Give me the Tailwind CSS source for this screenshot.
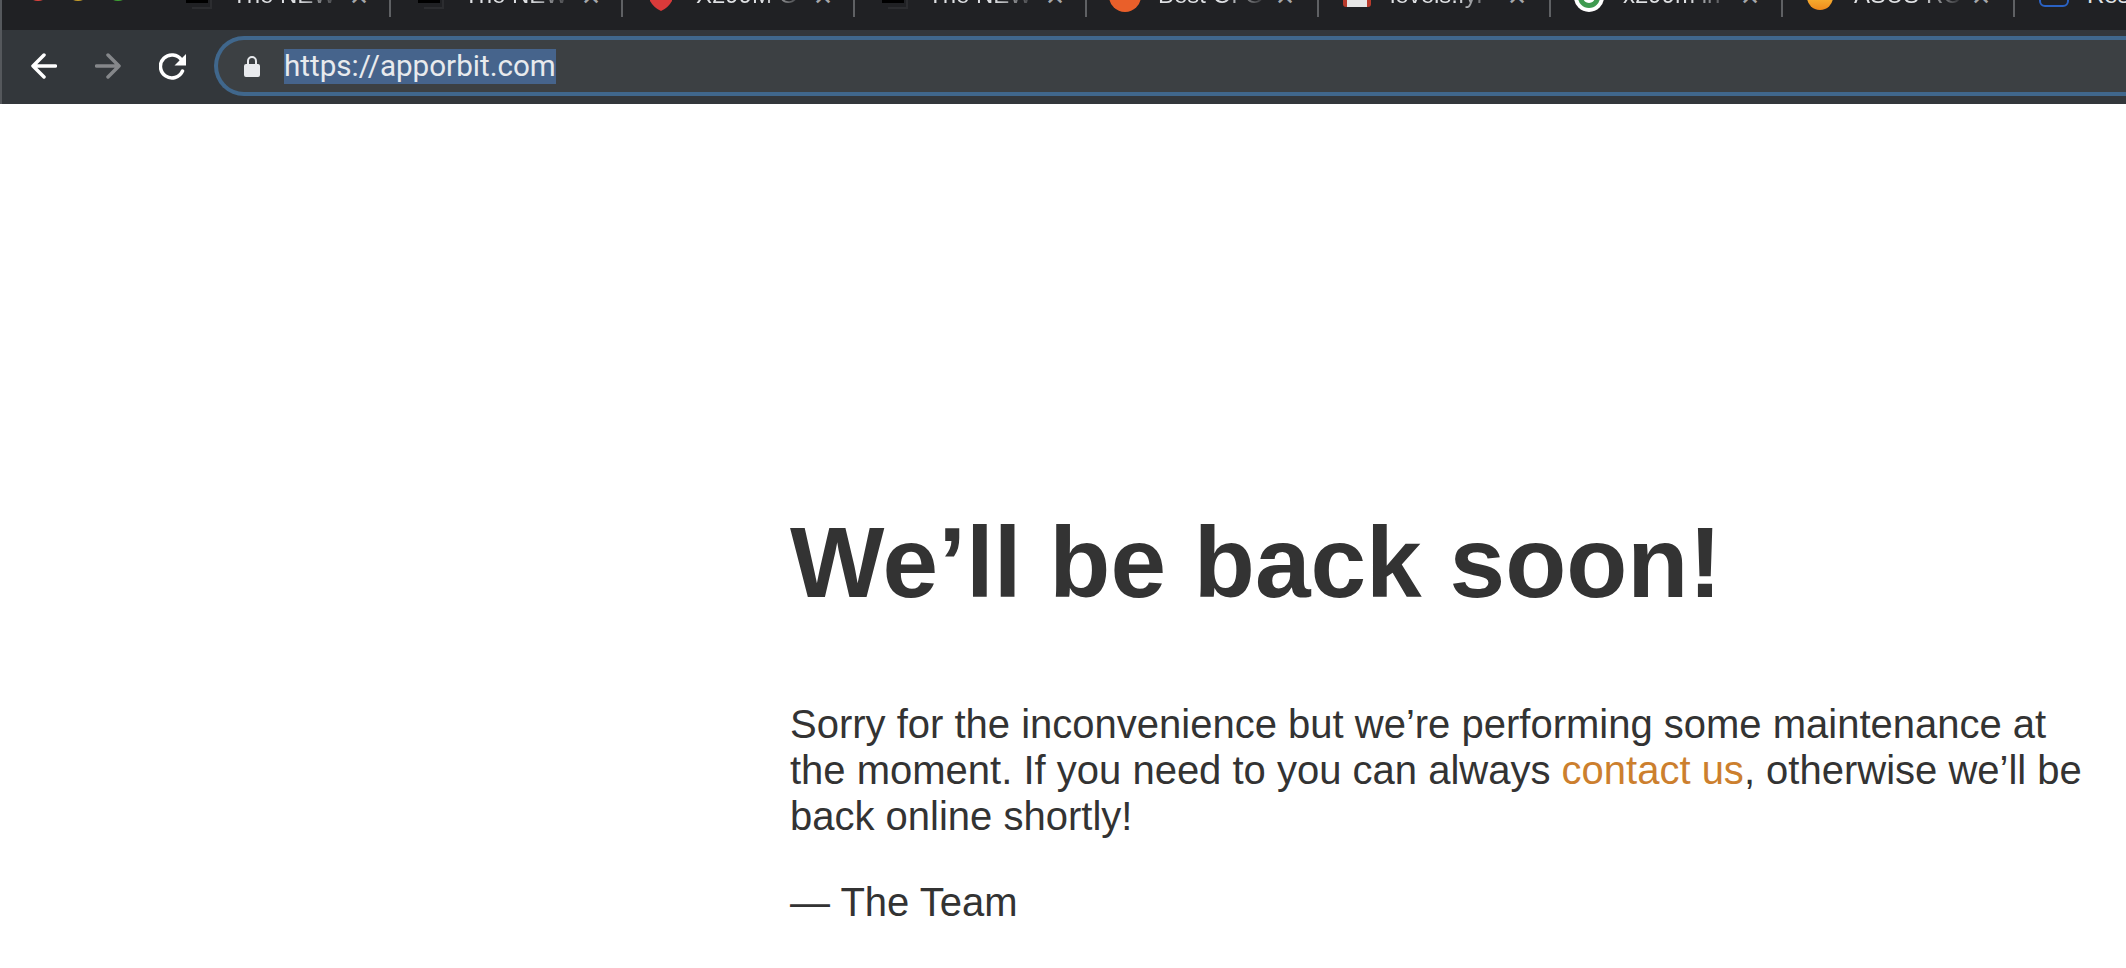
<!DOCTYPE html>
<html><head><meta charset="utf-8"><script src="https://cdn.jsdelivr.net/npm/@tailwindcss/browser@4"></script></head>
<body class="m-0 h-[968px] w-[2126px] overflow-hidden bg-white font-['Liberation_Sans',sans-serif]">
<div class="h-[30px] bg-[#202124] border-l-2 border-[#55585c] overflow-hidden flex items-start">
  <div class="flex gap-4 ml-6 mr-[29px] shrink-0">
    <div class="w-6 h-6 -mt-[23px] rounded-full bg-[#e0443e]"></div>
    <div class="w-6 h-6 -mt-[23px] rounded-full bg-[#c9a02c]"></div>
    <div class="w-6 h-6 -mt-[23px] rounded-full bg-[#3fa534]"></div>
  </div>
  <div class="flex">
    <div class="flex w-[232px] shrink-0 h-[17px] border-r-2 border-[#5f6164] items-start pl-[27px]">
      <svg class="w-7 h-7 -mt-[19px] shrink-0" viewBox="0 0 28 28"><path d="M0 0h22v22H0z" fill="#000"/><path d="M24 6h2v22H6v-2h18z" fill="#2c2d30"/></svg>
      <span class="ml-[18px] -mt-[19px] w-[110px] overflow-hidden whitespace-nowrap text-[24px] leading-[28px] bg-[linear-gradient(90deg,#dfe1e4_60%,#202124_100%)] bg-clip-text text-transparent">The NEW</span>
      <span class="ml-[7px] -mt-[15px] text-[#a5a7aa] text-[24px] leading-[24px]">✕</span>
    </div>
    <div class="flex w-[232px] shrink-0 h-[17px] border-r-2 border-[#5f6164] items-start pl-[27px]">
      <svg class="w-7 h-7 -mt-[19px] shrink-0" viewBox="0 0 28 28"><path d="M0 0h22v22H0z" fill="#000"/><path d="M24 6h2v22H6v-2h18z" fill="#2c2d30"/></svg>
      <span class="ml-[18px] -mt-[19px] w-[110px] overflow-hidden whitespace-nowrap text-[24px] leading-[28px] bg-[linear-gradient(90deg,#dfe1e4_60%,#202124_100%)] bg-clip-text text-transparent">The NEW</span>
      <span class="ml-[7px] -mt-[15px] text-[#a5a7aa] text-[24px] leading-[24px]">✕</span>
    </div>
    <div class="flex w-[232px] shrink-0 h-[17px] border-r-2 border-[#5f6164] items-start pl-[27px]">
      <svg class="w-[22px] h-[30px] -mt-[19px] shrink-0" viewBox="0 0 22 30"><path d="M0 0h22v20q-4 7-11 10Q4 27 0 20z" fill="#d93a3a"/><circle cx="11" cy="13" r="5" fill="none" stroke="#fff" stroke-width="2"/></svg>
      <span class="ml-[24px] -mt-[19px] w-[110px] overflow-hidden whitespace-nowrap text-[24px] leading-[28px] bg-[linear-gradient(90deg,#dfe1e4_60%,#202124_100%)] bg-clip-text text-transparent">X299M G</span>
      <span class="ml-[7px] -mt-[15px] text-[#a5a7aa] text-[24px] leading-[24px]">✕</span>
    </div>
    <div class="flex w-[232px] shrink-0 h-[17px] border-r-2 border-[#5f6164] items-start pl-[27px]">
      <svg class="w-7 h-7 -mt-[19px] shrink-0" viewBox="0 0 28 28"><path d="M0 0h22v22H0z" fill="#000"/><path d="M24 6h2v22H6v-2h18z" fill="#2c2d30"/></svg>
      <span class="ml-[18px] -mt-[19px] w-[110px] overflow-hidden whitespace-nowrap text-[24px] leading-[28px] bg-[linear-gradient(90deg,#dfe1e4_60%,#202124_100%)] bg-clip-text text-transparent">The NEW</span>
      <span class="ml-[7px] -mt-[15px] text-[#a5a7aa] text-[24px] leading-[24px]">✕</span>
    </div>
    <div class="flex w-[232px] shrink-0 h-[17px] border-r-2 border-[#5f6164] items-start pl-[22px]">
      <div class="w-8 h-8 -mt-5 rounded-full bg-[#e95f2a] shrink-0"></div>
      <span class="ml-[17px] -mt-[19px] w-[110px] overflow-hidden whitespace-nowrap text-[24px] leading-[28px] bg-[linear-gradient(90deg,#dfe1e4_60%,#202124_100%)] bg-clip-text text-transparent">Best Of G</span>
      <span class="ml-[7px] -mt-[15px] text-[#a5a7aa] text-[24px] leading-[24px]">✕</span>
    </div>
    <div class="flex w-[232px] shrink-0 h-[17px] border-r-2 border-[#5f6164] items-start pl-[24px]">
      <svg class="w-7 h-7 -mt-[21px] shrink-0" viewBox="0 0 28 28"><path d="M0 0h28v25q0 3-3 3H3q-3 0-3-3z" fill="#b83a2c"/><path d="M4 8h20v20H4z" fill="#e6e6e6"/></svg>
      <span class="ml-[19px] -mt-[19px] w-[110px] overflow-hidden whitespace-nowrap text-[24px] leading-[28px] bg-[linear-gradient(90deg,#dfe1e4_60%,#202124_100%)] bg-clip-text text-transparent">levels.fyi</span>
      <span class="ml-[7px] -mt-[15px] text-[#a5a7aa] text-[24px] leading-[24px]">✕</span>
    </div>
    <div class="flex w-[232px] shrink-0 h-[17px] border-r-2 border-[#5f6164] items-start pl-[23px]">
      <svg class="w-[30px] h-[30px] -mt-[18px] shrink-0" viewBox="0 0 30 30"><circle cx="15" cy="15" r="15" fill="#fff"/><path d="M4 15a11 11 0 0 0 22 0z" fill="#3f9b50"/><path d="M4 15a11 11 0 0 1 22 0z" fill="#e8b93a"/><circle cx="15" cy="15" r="6" fill="#fff"/></svg>
      <span class="ml-[19px] -mt-[19px] w-[110px] overflow-hidden whitespace-nowrap text-[24px] leading-[28px] bg-[linear-gradient(90deg,#dfe1e4_60%,#202124_100%)] bg-clip-text text-transparent">x299m in</span>
      <span class="ml-[7px] -mt-[15px] text-[#a5a7aa] text-[24px] leading-[24px]">✕</span>
    </div>
    <div class="flex w-[232px] shrink-0 h-[17px] border-r-2 border-[#5f6164] items-start pl-[24px]">
      <div class="w-[26px] h-[28px] -mt-[18px] rounded-full bg-[linear-gradient(180deg,#ffe14d,#f08a1c)] shrink-0"></div>
      <span class="ml-[21px] -mt-[19px] w-[110px] overflow-hidden whitespace-nowrap text-[24px] leading-[28px] bg-[linear-gradient(90deg,#dfe1e4_60%,#202124_100%)] bg-clip-text text-transparent">ASUS RO</span>
      <span class="ml-[7px] -mt-[15px] text-[#a5a7aa] text-[24px] leading-[24px]">✕</span>
    </div>
    <div class="flex w-[232px] shrink-0 h-[17px] items-start pl-[24px]">
      <div class="w-[30px] h-[30px] -mt-[23px] rounded-md border-2 border-[#2a62c4] shrink-0"></div>
      <span class="ml-[18px] -mt-[19px] text-[#dfe1e4] text-[24px] leading-[28px]">Res</span>
    </div>
  </div>
</div>
<div class="h-[74px] pb-[2px] bg-[#33373b] border-l-2 border-[#55585c] flex items-center pl-[29px]">
  <svg class="w-[26px] h-[26px] shrink-0" viewBox="0 0 26 26" fill="none" stroke="#fff" stroke-width="3.5" stroke-linecap="round" stroke-linejoin="round"><path d="M24.5 13H2M13 2 2 13l11 11"/></svg>
  <svg class="w-[26px] h-[26px] ml-[38px] shrink-0" viewBox="0 0 26 26" fill="none" stroke="#85878a" stroke-width="3.5" stroke-linecap="round" stroke-linejoin="round"><path d="M1.5 13H24M13 2l11 11-11 11"/></svg>
  <svg class="w-[27px] h-[27px] ml-[38px] shrink-0" viewBox="0 0 27 27" fill="none" stroke="#fff" stroke-width="3.5" stroke-linecap="round"><path d="M23.5 18a11.5 11.5 0 1 1-1-11"/><path d="M27 1v11.5H15.5z" fill="#fff" stroke="none"/></svg>
  <div class="ml-[28px] flex-1 h-[60px] rounded-l-[30px] border-y-4 border-l-4 border-[#40678c] bg-[#3c4043] flex items-center pl-[26px]">
    <svg class="w-4 h-[21px] shrink-0" viewBox="0 0 16 21"><path d="M2 8h12a2 2 0 0 1 2 2v9a2 2 0 0 1-2 2H2a2 2 0 0 1-2-2v-9a2 2 0 0 1 2-2zM3 8V5a5 5 0 0 1 10 0v3h-2V5a3 3 0 0 0-6 0v3z" fill="#e8eaed"/></svg>
    <span class="ml-6 bg-[#46648c] text-[#e8eaed] text-[29.6px] leading-[35px] font-['Roboto',sans-serif] whitespace-nowrap">https://apporbit.com</span>
  </div>
</div>
<main class="pl-[790px] pt-[403px] w-[2090px] text-[#333]">
  <h1 class="text-[100px] font-bold leading-[110px]">We’ll be back soon!</h1>
  <div class="mt-[84px] text-[40px] leading-[46px]"><p>Sorry for the inconvenience but we’re performing some maintenance at the moment. If you need to you can always <a class="text-[#cc7f2e]">contact us</a>, otherwise we’ll be back online shortly!</p><p class="mt-[40px]">— The Team</p></div>
</main>
</body></html>
